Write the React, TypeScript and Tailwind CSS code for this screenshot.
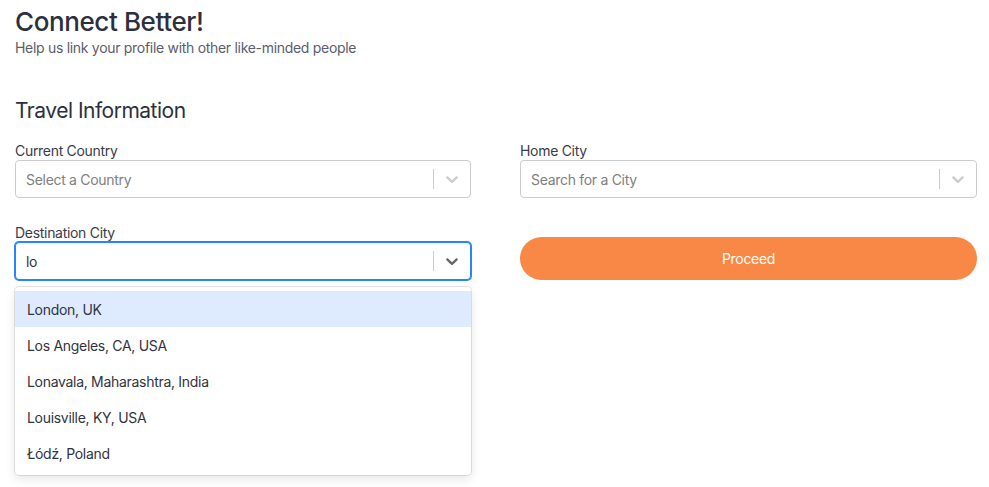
import React from "react";

const font = { fontFamily: "Inter, 'Noto Sans', Arial, sans-serif" };

function Chevron({ dark }: { dark?: boolean }) {
  return (
    <svg
      viewBox="0 0 20 20"
      width="20"
      height="20"
      className={dark ? "fill-[#666666]" : "fill-[#cccccc]"}
    >
      <path d="M4.516 7.548c0.436-0.446 1.043-0.481 1.576 0l3.908 3.747 3.908-3.747c0.533-0.481 1.141-0.446 1.574 0 0.436 0.445 0.408 1.197 0 1.615-0.406 0.418-4.695 4.502-4.695 4.502-0.217 0.223-0.502 0.335-0.787 0.335s-0.57-0.112-0.789-0.335c0 0-4.287-4.084-4.695-4.502s-0.436-1.17 0-1.615z" />
    </svg>
  );
}

function Select({
  placeholder,
  value,
  focused,
}: {
  placeholder?: string;
  value?: string;
  focused?: boolean;
}) {
  return (
    <div
      className={
        "flex items-center h-[38px] rounded-[4px] bg-white " +
        (focused
          ? "border border-[#2684ff] shadow-[0_0_0_1px_#2684ff]"
          : "border border-[#cccccc]")
      }
    >
      <div className="flex-1 px-[10px] text-[14px] tracking-[-0.3px]">
        {value ? (
          <span className="text-[#333333]">{value}</span>
        ) : (
          <span className="text-[#808080]">{placeholder}</span>
        )}
      </div>
      <span className="w-px h-[20px] bg-[#cccccc]" />
      <div className="p-[8px]">
        <Chevron dark={focused} />
      </div>
    </div>
  );
}

const cities = [
  "London, UK",
  "Los Angeles, CA, USA",
  "Lonavala, Maharashtra, India",
  "Louisville, KY, USA",
  "Łódź, Poland",
];

export default function App() {
  return (
    <div className="w-[989px] h-[487px] bg-white px-[15px] pt-[4px]" style={font}>
      <h1 className="text-[26px] font-medium leading-[36px] tracking-[-0.4px] text-[#2d2f3e]">
        Connect Better!
      </h1>
      <p className="-mt-[1px] text-[14px] leading-[18px] tracking-[-0.3px] text-[#5b5d6b]">
        Help us link your profile with other like-minded people
      </p>

      <h2 className="mt-[39px] text-[21px] leading-[30px] tracking-[-0.5px] text-[#2d2f3e]">
        Travel Information
      </h2>

      <div className="mt-[16px] grid grid-cols-[456px_457px] gap-x-[49px]">
        <div>
          <label className="block text-[14px] leading-[18px] tracking-[-0.3px] text-[#3a3c48]">
            Current Country
          </label>
          <Select placeholder="Select a Country" />
        </div>
        <div>
          <label className="block text-[14px] leading-[18px] tracking-[-0.3px] text-[#3a3c48]">
            Home City
          </label>
          <Select placeholder="Search for a City" />
        </div>

        <div className="relative mt-[26px]">
          <label className="block text-[14px] leading-[18px] tracking-[-0.3px] text-[#3a3c48]">
            Destination City
          </label>
          <Select value="lo" focused />
          <div className="absolute left-0 right-0 top-[63px] rounded-[4px] bg-white py-[4px] shadow-[0_0_0_1px_rgba(0,0,0,0.1),0_4px_11px_rgba(0,0,0,0.1)]">
            {cities.map((c, i) => (
              <div
                key={c}
                className={
                  "px-[12px] h-[36px] flex items-center text-[14px] tracking-[-0.3px] text-[#333340] " +
                  (i === 0 ? "bg-[#deebff]" : "")
                }
              >
                {c}
              </div>
            ))}
          </div>
        </div>
        <div className="mt-[26px] pt-[13px]">
          <button className="w-full h-[43px] rounded-full bg-[#f98746] text-white text-[14px] tracking-[-0.3px]">
            Proceed
          </button>
        </div>
      </div>
    </div>
  );
}
